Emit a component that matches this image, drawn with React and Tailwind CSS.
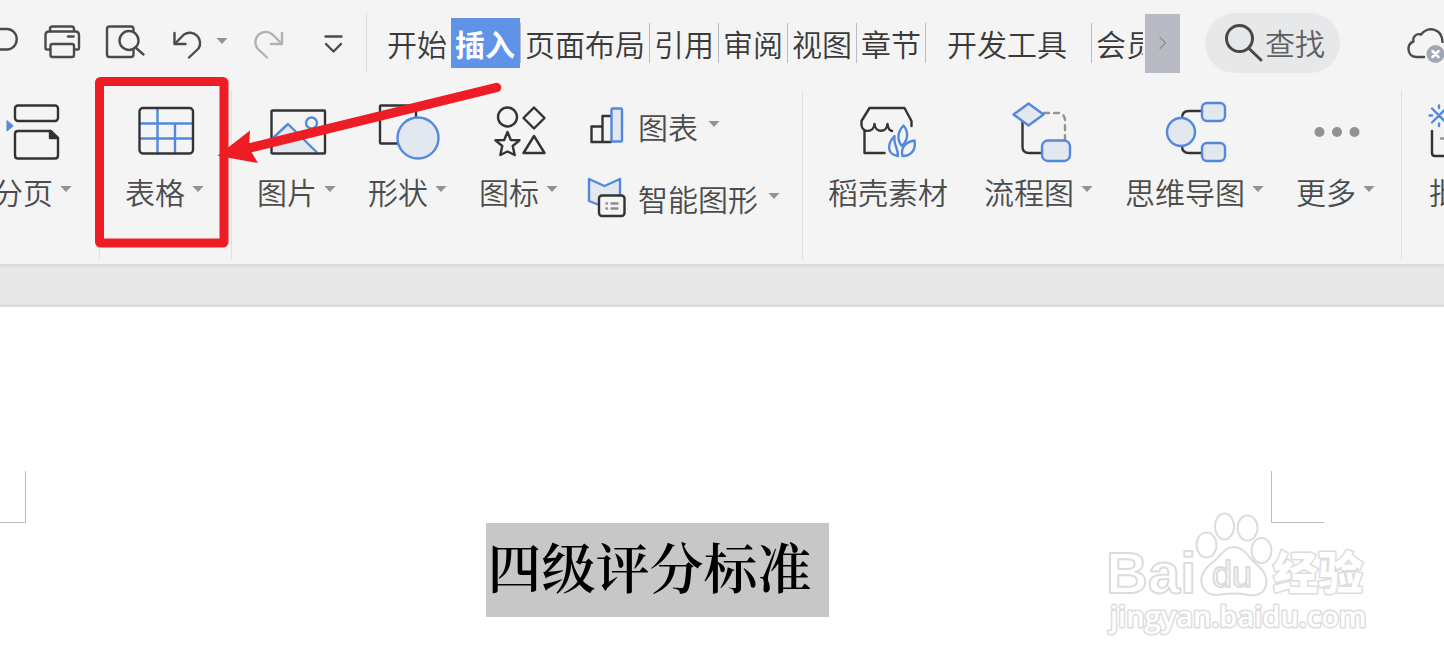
import React from 'react';

const INK = '#333333';
const BLUE = '#5389dc';
const PALE = '#e3e7f0';

function Drawing({ box, className, stroke = INK, width = 2.4, children }) {
  return (
    <svg
      viewBox={box}
      className={`shrink-0 ${className}`}
      fill="none"
      stroke={stroke}
      strokeWidth={width}
      strokeLinecap="round"
      strokeLinejoin="round"
      aria-hidden="true"
    >
      {children}
    </svg>
  );
}

function Caret() {
  return (
    <svg viewBox="0 0 12 14" className="h-[14px] w-3 shrink-0" aria-hidden="true">
      <path d="M0.5 2H11.5L6 8Z" fill="#929292" />
    </svg>
  );
}

function Tool({ label, caret = true, className = '', children }) {
  return (
    <button type="button" className={`flex shrink-0 flex-col items-center gap-[6px] ${className}`}>
      {children}
      <span className="flex items-center gap-[7px] whitespace-nowrap text-[30px] leading-[42px]">
        {label}
        {caret && <Caret />}
      </span>
    </button>
  );
}

function RowTool({ label, children }) {
  return (
    <button type="button" className="flex h-[72px] items-center gap-2">
      {children}
      <span className="flex items-center gap-[10px] whitespace-nowrap text-[30px] leading-[42px]">
        {label}
        <Caret />
      </span>
    </button>
  );
}

function Group({ className = '', children }) {
  return (
    <div className={`mt-1 flex h-[170px] shrink-0 items-start border-[#e0e0e0] pt-[10px] ${className}`}>
      {children}
    </div>
  );
}

function QuickAccess() {
  return (
    <div className="flex shrink-0 items-center gap-5">
      <button type="button" aria-label="保存">
        <Drawing box="0 23 22 40" className="h-10 w-[22px]" stroke="#4a4a4a">
          <path d="M-2 29H7A9.5 10 0 0 1 7 49.500H-2" />
        </Drawing>
      </button>
      <button type="button" aria-label="打印">
        <Drawing box="42 23 40 40" className="h-10 w-10" stroke="#4a4a4a">
          <path d="M50 31V29Q50 26.500 52.500 26.500H71.500Q74 26.500 74 29V31" />
          <path d="M50 49.500H47Q45.500 49.500 45.500 48V35Q45.500 31.500 49 31.500H75.500Q79 31.500 79 35V48Q79 49.500 77.500 49.500H74" />
          <rect x="50.500" y="44" width="23.500" height="13" rx="2" />
          <path d="M68 36.500H73.500" />
        </Drawing>
      </button>
      <button type="button" aria-label="打印预览">
        <Drawing box="102 23 46 40" className="h-10 w-[46px]" stroke="#4a4a4a">
          <path d="M133.500 31V29Q133.500 26.500 131 26.500H109.500Q107 26.500 107 29V54.500Q107 57 109.500 57H131Q133.500 57 133.500 54.500V50" />
          <circle cx="129" cy="40.500" r="9.500" />
          <path d="M135.500 47.500L143.500 54.500" />
        </Drawing>
      </button>
      <button type="button" aria-label="撤销" className="flex items-center gap-2">
        <Drawing box="168 23 40 40" className="h-10 w-10" stroke="#4a4a4a">
          <path d="M174.500 33V44H185.500" />
          <path d="M175 43.500L184 34.500A10.300 10.300 0 0 1 198.500 48.500L189 57.500" />
        </Drawing>
        <Caret />
      </button>
      <button type="button" aria-label="重做">
        <Drawing box="248 23 44 40" className="h-10 w-11" stroke="#b2b2b2">
          <path d="M282 33V44H271" />
          <path d="M281.500 43.500L272.500 34.500A10.300 10.300 0 0 0 257.500 48.500L267 57.500" />
        </Drawing>
      </button>
      <button type="button" aria-label="自定义快速访问工具栏">
        <Drawing box="312 23 42 40" className="h-10 w-[42px]" stroke="#4a4a4a">
          <path d="M325.500 36.500H341.500M326 44L333.500 51.500L341 44" />
        </Drawing>
      </button>
    </div>
  );
}

const TABS = [
  { name: '开始', look: 'border-transparent px-1' },
  { name: '插入', look: 'h-[50px] border-[#5f93e8] bg-[#5f93e8] pl-[3px] pr-[5px] font-bold text-white', active: true },
  { name: '页面布局', look: 'border-[#b6bccb] px-1' },
  { name: '引用', look: 'border-[#b6bccb] px-1' },
  { name: '审阅', look: 'border-[#b6bccb] px-1' },
  { name: '视图', look: 'border-[#b6bccb] px-1' },
  { name: '章节', look: 'border-[#b6bccb] px-1' },
  { name: '开发工具', look: 'border-[#b6bccb] pl-[21px] pr-6' },
  { name: '会员专享', look: 'border-[#b6bccb] px-1' },
];

function TopBar() {
  return (
    <header className="flex h-[86px] items-center">
      <QuickAccess />
      <div className="ml-3 h-[60px] w-px shrink-0 bg-[#dcdcdc]" />
      <nav className="ml-[15px] mr-[2px] flex min-w-0 flex-1 items-center overflow-hidden text-[30px] text-[#3a3a3a]">
        {TABS.map((tab) => (
          <button
            key={tab.name}
            type="button"
            aria-current={tab.active ? 'page' : undefined}
            className={`flex min-h-10 shrink-0 items-center whitespace-nowrap border-l leading-10 ${tab.look}`}
          >
            {tab.name}
          </button>
        ))}
      </nav>
      <button type="button" aria-label="更多选项卡" className="flex h-[59px] w-[35px] shrink-0 items-center justify-center bg-[#b8bbc3]">
        <Drawing box="0 0 12 16" className="h-4 w-3" stroke="#666666" width={1}>
          <path d="M3 2.500L8.500 8L3 13.500" />
        </Drawing>
      </button>
      <button type="button" className="ml-[25px] flex h-[60px] w-[135px] shrink-0 items-center rounded-full bg-[#e6e8ea] pb-[2px] pl-[18px] text-[30px] leading-10 text-[#606060]">
        <Drawing box="1223 22 42 42" className="h-[42px] w-[42px]" stroke="#484848" width={3}>
          <circle cx="1239.500" cy="39.500" r="13" />
          <path d="M1249 49.500L1261 61" />
        </Drawing>
        查找
      </button>
      <button type="button" aria-label="云同步" className="ml-[62px] w-[42px] shrink-0 overflow-hidden">
        <Drawing box="1402 22 42 42" className="h-[42px] w-[42px]" stroke="#4a4a4a">
          <path d="M1424 57H1416.500C1411 57 1408.500 53 1408.500 49C1408.500 45.500 1410.500 42.500 1413.500 41.500C1412.500 37 1416 33 1421 34.500C1427 26 1442 27.500 1442.500 42" />
          <circle cx="1435.500" cy="54" r="9" fill="#a0a8b8" stroke="none" />
          <path d="M1432.500 51L1438.500 57M1438.500 51L1432.500 57" stroke="#ffffff" strokeWidth="2.500" />
        </Drawing>
      </button>
    </header>
  );
}

function Ribbon() {
  return (
    <div className="flex h-[178px] items-start text-[#4c4c4c]">
      <Group className="-ml-[7px] border-r pr-[27px]">
        <Tool label="分页">
          <Drawing box="1 100 64 64" className="h-16 w-16">
            <rect x="15" y="105.500" width="43" height="15.500" rx="3" />
            <path d="M51 131H18Q15 131 15 134V155.500Q15 158.500 18 158.500H55Q58 158.500 58 155.500V138Z" />
            <path d="M50 131V138H58Z" fill={INK} />
            <path d="M7 121V131L13 126Z" fill={BLUE} stroke={BLUE} strokeWidth="1" />
          </Drawing>
        </Tool>
      </Group>
      <Group className="border-r pl-[25px] pr-[27px]">
        <Tool label="表格">
          <Drawing box="133 100 64 64" className="h-16 w-16">
            <path d="M157.500 109V153M175 124V153M140 123.500H192M140 138.500H192" stroke={BLUE} />
            <rect x="139.500" y="108" width="53.500" height="45.500" rx="3.500" />
          </Drawing>
        </Tool>
      </Group>
      <Group className="border-r pl-[25px] pr-[22px]">
        <div className="flex gap-8">
          <Tool label="图片">
            <Drawing box="265 100 64 64" className="h-16 w-16">
              <path d="M272 140L288 124.500L316 152.500H272Z" fill={PALE} stroke="none" />
              <path d="M274 137L288 124L316.500 152" stroke={BLUE} />
              <circle cx="311.500" cy="123" r="5.500" stroke={BLUE} />
              <rect x="271.500" y="110.500" width="53.500" height="43" rx="1" />
            </Drawing>
          </Tool>
          <Tool label="形状">
            <Drawing box="376 100 64 64" className="h-16 w-16">
              <rect x="380" y="105.500" width="36" height="38" rx="1" />
              <circle cx="418" cy="138" r="20.500" fill={PALE} stroke={BLUE} />
            </Drawing>
          </Tool>
          <Tool label="图标">
            <Drawing box="487 100 64 64" className="h-16 w-16">
              <circle cx="507.500" cy="117" r="9.500" />
              <path d="M534 107.500L544.500 118L534 128.500L523.500 118Z" />
              <path d="M507.500 132L510.800 140L519.500 140.300L512.700 146L514.700 155L507.500 151.500L500.300 155L502.300 146L495.500 140.300L504.200 140Z" />
              <path d="M534 136L544.500 153H523.500Z" />
            </Drawing>
          </Tool>
        </div>
        <div className="-mt-[10px] ml-7 flex flex-col items-start">
          <RowTool label="图表">
            <Drawing box="586 104 44 44" className="h-11 w-11">
              <path d="M611 142H591.500V126.500H602.500V142M602.500 126V116H611" />
              <rect x="611.500" y="108.500" width="10.500" height="33" rx="1" fill={PALE} stroke={BLUE} />
            </Drawing>
          </RowTool>
          <RowTool label="智能图形">
            <Drawing box="586 176 44 44" className="h-11 w-11">
              <path d="M589 179L604.500 186L620 179V202.500L604.500 207L589 201Z" fill={PALE} stroke={BLUE} />
              <rect x="599" y="195.500" width="25.500" height="20.500" rx="3" fill="#f4f4f4" />
              <path d="M606.500 203.500H607M606.500 208.500H607M611.500 203.500H617.500M611.500 208.500H617.500" stroke="#8c8c8c" />
            </Drawing>
          </RowTool>
        </div>
      </Group>
      <Group className="gap-8 border-r pl-[25px] pr-[26px]">
        <Tool label="稻壳素材" caret={false} className="mr-1">
          <Drawing box="856 100 64 64" className="h-16 w-16">
            <path d="M911.500 126V121L904.500 108H869.500L861.500 121V125C862 133 874 133 874.500 124C875 133 887 133 887.500 124C888 129 889.500 130.500 892 131M864.500 130V153H884.500" />
            <g stroke={BLUE}>
              <path d="M903.500 125.500C896.500 133 897.500 141 902 146C908 140 909 132 903.500 125.500Z" />
              <path d="M894.500 136C887 144 886.500 154 898 156C898.500 149 893 144 894.500 136Z" />
              <path d="M914.500 140.500C905 142 900.500 148 902.500 156C912 156 916 149 914.500 140.500Z" />
            </g>
          </Drawing>
        </Tool>
        <Tool label="流程图">
          <Drawing box="1006 100 64 64" className="h-16 w-16 overflow-visible">
            <path d="M1021.500 121V147Q1021.500 153 1028 153H1040" />
            <path d="M1043 113H1058Q1064 114 1064 121V139" stroke="#929292" strokeDasharray="5 5" />
            <path d="M1027.500 103.500L1042.500 114.500L1027.500 125.500L1012.500 114.500Z" fill={PALE} stroke={BLUE} />
            <rect x="1041" y="140.500" width="28" height="20.500" rx="6" fill={PALE} stroke={BLUE} />
          </Drawing>
        </Tool>
        <Tool label="思维导图">
          <Drawing box="1163 100 64 64" className="h-16 w-16">
            <path d="M1182 118Q1182 111 1189 111H1202M1182 146Q1182 153 1189 153H1202" />
            <circle cx="1181" cy="132" r="14" fill={PALE} stroke={BLUE} />
            <rect x="1202" y="103" width="23" height="18" rx="5" fill={PALE} stroke={BLUE} />
            <rect x="1202" y="143" width="23" height="18" rx="5" fill={PALE} stroke={BLUE} />
          </Drawing>
        </Tool>
        <Tool label="更多">
          <Drawing box="1304 100 64 64" className="h-16 w-16">
            <g fill="#929292" stroke="none">
              <circle cx="1319.500" cy="132" r="5" />
              <circle cx="1337" cy="132" r="5" />
              <circle cx="1354.500" cy="132" r="5" />
            </g>
          </Drawing>
        </Tool>
      </Group>
      <Group className="pl-[25px]">
        <Tool label="批注" caret={false}>
          <Drawing box="1427 100 64 64" className="h-16 w-16">
            <path d="M1439 105.500V108M1439 123.500V126M1429.500 115.500H1432M1446 115.500H1449M1432 108.500L1446 122.500M1446 108.500L1432 122.500" stroke={BLUE} />
            <path d="M1432 131V153Q1432 156 1435 156H1480" />
            <path d="M1441 138.500H1462" stroke="#929292" />
          </Drawing>
        </Tool>
      </Group>
    </div>
  );
}

function Watermark() {
  return (
    <svg
      viewBox="1100 505 275 135"
      className="absolute right-[69px] top-[505px] h-[135px] w-[275px] select-none"
      fill="#ffffff"
      stroke="#dcdcdc"
      strokeWidth="2"
      strokeLinejoin="round"
      role="img"
      aria-label="Baidu 经验 jingyan.baidu.com"
    >
      <text x="1106" y="593" fontSize="58" fontWeight="700" fontFamily="'Liberation Sans', Arial, sans-serif">Bai</text>
      <ellipse cx="1206.500" cy="545" rx="10" ry="12.500" />
      <ellipse cx="1224.500" cy="526.500" rx="9.500" ry="13" />
      <ellipse cx="1247.500" cy="528" rx="10" ry="12.500" />
      <ellipse cx="1261.500" cy="550.500" rx="10" ry="12.500" />
      <path d="M1234 547C1224 547 1221 556 1213 562C1205 568 1199 575 1202 585C1205 594 1213 596 1221 594.500C1230 593 1237 593 1246 594.500C1256 597 1264 594 1266 585C1268 575 1262 569 1255 563C1247 556 1244 547 1234 547Z" />
      <text x="1212" y="587" fontSize="36" fontWeight="400" fontFamily="'Liberation Sans', Arial, sans-serif">du</text>
      <text x="1273" y="590" fontSize="45" fontWeight="900" paintOrder="stroke" strokeWidth="3" fontFamily="'Noto Sans CJK SC', sans-serif">经验</text>
      <text x="1110" y="627" fontSize="29" fontWeight="600" paintOrder="stroke" strokeWidth="3" fontFamily="'Open Sans', 'Noto Sans', sans-serif">jingyan.baidu.com</text>
    </svg>
  );
}

function Callout() {
  return (
    <svg viewBox="90 70 420 185" className="pointer-events-none absolute left-[90px] top-[70px] h-[185px] w-[420px]" aria-hidden="true">
      <rect x="99.500" y="81.500" width="124.500" height="161.500" rx="1" fill="none" stroke="#ee1c24" strokeWidth="9" strokeLinejoin="round" />
      <path d="M247 148.500L496.500 87.500" stroke="#ee1c24" strokeWidth="9.500" strokeLinecap="round" />
      <path d="M217.500 155.700L250 130.500L249 148L258 163Z" fill="#ee1c24" />
    </svg>
  );
}

function Page() {
  return (
    <main className="flex-1 bg-white pt-[164px]">
      <div className="flex h-[52px] justify-between">
        <div className="w-[26px] border-b border-r border-[#bdbdbd]" />
        <div className="mr-[120px] w-[53px] border-b border-l border-[#bdbdbd]" />
      </div>
      <div className="flex justify-center pr-[130px]">
        <h1 className="whitespace-nowrap bg-[#c7c7c7] pb-2 pl-[2px] pr-[17px] font-['Noto_Serif_CJK_SC','Noto_Sans_CJK_SC',serif] text-[54px] font-semibold leading-[86px] text-black">
          四级评分标准
        </h1>
      </div>
    </main>
  );
}

export default function App() {
  return (
    <div className="relative flex min-h-screen flex-col overflow-hidden bg-[#f4f4f4] font-['Noto_Sans_CJK_SC',sans-serif] font-[350]">
      <TopBar />
      <Ribbon />
      <div className="flex h-[43px] flex-col justify-between bg-[#e7e7e7]">
        <div className="h-1 bg-linear-to-b from-[#d6d6d6] to-[#e7e7e7]" />
        <div className="h-1 bg-linear-to-b from-[#e7e7e7] to-[#dadada]" />
      </div>
      <Page />
      <Callout />
      <Watermark />
    </div>
  );
}
